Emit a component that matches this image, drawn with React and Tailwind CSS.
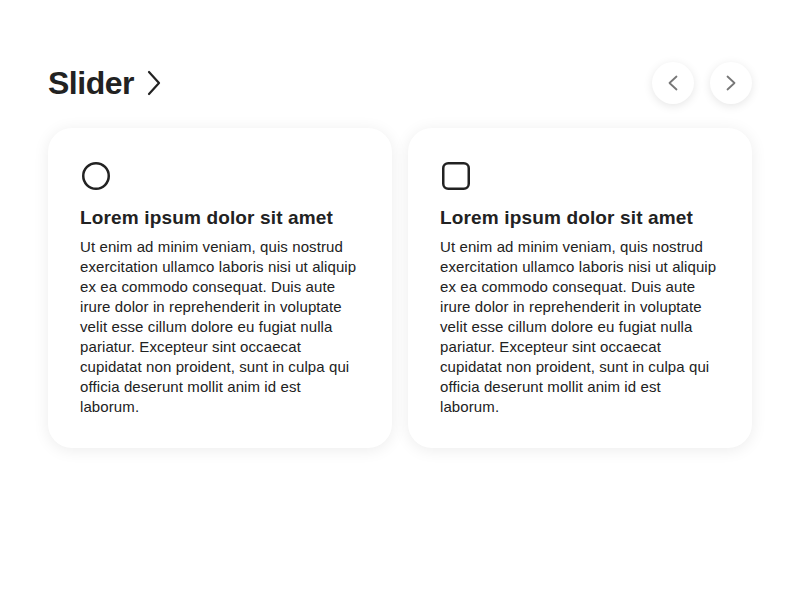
import React from "react";

const body =
  "Ut enim ad minim veniam, quis nostrud exercitation ullamco laboris nisi ut aliquip ex ea commodo consequat. Duis aute irure dolor in reprehenderit in voluptate velit esse cillum dolore eu fugiat nulla pariatur. Excepteur sint occaecat cupidatat non proident, sunt in culpa qui officia deserunt mollit anim id est laborum.";

function Card({ shape }) {
  return (
    <div className="flex-1 bg-white rounded-[24px] shadow-[0_2px_16px_rgba(0,0,0,0.08)] px-8 pt-8 pb-8 h-[320px]">
      <svg width="32" height="32" viewBox="0 0 32 32" fill="none" stroke="#222" strokeWidth="2.5" className="mb-3">
        {shape === "circle" ? (
          <circle cx="16" cy="16" r="12.75" />
        ) : (
          <rect x="3.25" y="3.25" width="25.5" height="25.5" rx="5" />
        )}
      </svg>
      <h3 className="text-[19px] leading-7 font-bold tracking-[0.15px] text-[#222]">Lorem ipsum dolor sit amet</h3>
      <p className="mt-[5px] text-[15px] leading-5 tracking-[0.1px] text-[#222]">{body}</p>
    </div>
  );
}

function NavBtn({ dir }) {
  return (
    <button className="w-[42px] h-[42px] rounded-full bg-white shadow-[0_2px_10px_rgba(0,0,0,0.1)] flex items-center justify-center">
      <svg width="16" height="16" viewBox="0 0 16 16" fill="none" stroke="#777" strokeWidth="1.8" strokeLinecap="round" strokeLinejoin="round">
        {dir === "left" ? <path d="M11.5 1.5 4.5 8l7 6.5" /> : <path d="M4.5 1.5 11.5 8l-7 6.5" />}
      </svg>
    </button>
  );
}

export default function App() {
  return (
    <div className="w-[800px] h-[600px] bg-white px-12 pt-[62px]" style={{ fontFamily: '"Liberation Sans", Arial, sans-serif' }}>
      <div className="flex items-center justify-between h-[42px]">
        <div className="flex items-center gap-3">
          <h2 className="text-[32px] font-semibold text-[#222] tracking-[-0.5px]">Slider</h2>
          <svg width="16" height="26" viewBox="0 0 16 26" fill="none" stroke="#222" strokeWidth="2.2" strokeLinecap="round" strokeLinejoin="round">
            <path d="M3 2l10 11L3 24" />
          </svg>
        </div>
        <div className="flex gap-4">
          <NavBtn dir="left" />
          <NavBtn dir="right" />
        </div>
      </div>
      <div className="flex gap-4 mt-6">
        <Card shape="circle" />
        <Card shape="square" />
      </div>
    </div>
  );
}
